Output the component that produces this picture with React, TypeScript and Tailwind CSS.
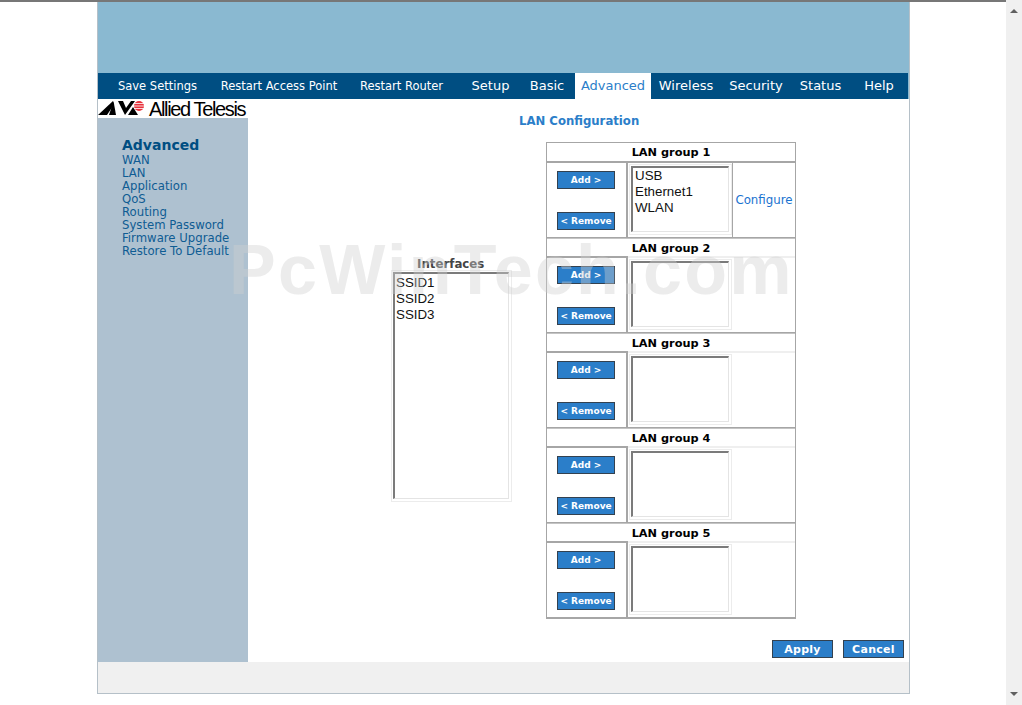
import React from 'react';

const sans = "font-['DejaVu_Sans','Verdana',sans-serif]";

const topLinks = [
    { label: 'Save Settings', w: 'w-[119px]' },
    { label: 'Restart Access Point', w: 'w-[124px]' },
    { label: 'Restart Router', w: 'w-[121px]' },
];

const tabs = [
    { label: 'Setup', w: 'w-[57px]' },
    { label: 'Basic', w: 'w-[56px]' },
    { label: 'Advanced', w: 'w-[76px]', active: true },
    { label: 'Wireless', w: 'w-[70px]' },
    { label: 'Security', w: 'w-[70px]' },
    { label: 'Status', w: 'w-[59px]' },
    { label: 'Help', w: 'w-[58px]' },
];

const sideLinks = ['WAN', 'LAN', 'Application', 'QoS', 'Routing', 'System Password', 'Firmware Upgrade', 'Restore To Default'];

const groups = [
    { name: 'LAN group 1', items: ['USB', 'Ethernet1', 'WLAN'], configure: true },
    { name: 'LAN group 2', items: [] },
    { name: 'LAN group 3', items: [] },
    { name: 'LAN group 4', items: [] },
    { name: 'LAN group 5', items: [] },
];

const SmallButton = ({ children }: { children: React.ReactNode }) => (
    <button className="h-[18px] w-[58px] whitespace-nowrap border border-[#33414f] bg-[#2b7ec9] p-0 text-[9px] font-bold leading-none text-white">
        {children}
    </button>
);

const BigButton = ({ children }: { children: React.ReactNode }) => (
    <button className="h-[18px] w-[61px] border border-[#33414f] bg-[#2b7ec9] text-[11px] font-bold leading-none tracking-[0.3px] text-white">
        {children}
    </button>
);

const ListBox = ({ items, className, inner = 'pl-[2px]' }: { items: string[]; className: string; inner?: string }) => (
    <div className={`border border-[#ececec] pb-[2px] pl-[1px] pr-[2px] pt-[1px] ${className}`}>
        <div className={`h-full border-b border-l-2 border-r border-t-2 border-b-[#e4e4e4] border-l-[#7b7b7b] border-r-[#e4e4e4] border-t-[#7b7b7b] bg-white font-['Liberation_Sans',sans-serif] text-[13.33px] leading-[16px] text-[#111] ${inner}`}>
            {items.map((item) => (
                <div key={item}>{item}</div>
            ))}
        </div>
    </div>
);

const LogoMark = () => (
    <svg width="50" height="19" viewBox="0 0 50 19" className="shrink-0">
        <polygon points="0,16 9,16 15,7 15,2" fill="#000" />
        <polygon points="11,16 18,16 15.5,2" fill="#000" />
        <polygon points="20,2 25,2 28,9 33,2 37,2 27,16" fill="#000" />
        <polygon points="30,16 40,16 35,8" fill="#000" />
        <circle cx="41" cy="7" r="5" fill="#e8323c" />
        <path d="M36 4.5h10M36 7h10M36 9.5h10" stroke="#fff" strokeWidth="0.8" />
    </svg>
);

export default function App() {
    return (
        <div className={`relative h-[705px] w-[1022px] overflow-hidden bg-white ${sans}`}>
            <div className="h-[2px] bg-[#777]" />
            <div className="flex h-[703px]">
                <div className="w-[97px]" />
                {/* 页面主框架 */}
                <div className="flex h-[692px] w-[813px] flex-col border-x border-b border-[#b5c0c8]">
                    <div className="h-[71px] bg-[#8ab9d1]" />
                    <div className="bg-[#8ab9d1]">
                        <nav className="flex h-[26px] w-[810px] items-stretch bg-[#004e82] text-white">
                            <div className="flex text-[11.5px]">
                                {topLinks.map((l) => (
                                    <div key={l.label} className={`flex items-center justify-center whitespace-nowrap pt-[2px] ${l.w}`}>
                                        {l.label}
                                    </div>
                                ))}
                            </div>
                            <div className="flex text-[13px]">
                                {tabs.map((t) => (
                                    <div
                                        key={t.label}
                                        className={`flex items-center justify-center ${t.w} ${t.active ? 'bg-white text-[#2b7ec9]' : ''}`}
                                    >
                                        {t.label}
                                    </div>
                                ))}
                            </div>
                        </nav>
                    </div>
                    <div className="flex h-[563px]">
                        {/* 左侧菜单 */}
                        <aside className="flex w-[150px] flex-col bg-[#aec1d0]">
                            <div className="flex h-[19px] items-center bg-white">
                                <LogoMark />
                                <span className="whitespace-nowrap pl-[1px] font-['Liberation_Sans',sans-serif] text-[20px] leading-none tracking-[-1.36px] text-black">
                                    Allied Telesis
                                </span>
                            </div>
                            <div className="pl-[24px] pt-[18px]">
                                <div className="text-[14px] font-bold leading-[18px] text-[#004e82]">Advanced</div>
                                {sideLinks.map((l) => (
                                    <div key={l} className="text-[11.7px] leading-[13px] text-[#0f5c93]">
                                        {l}
                                    </div>
                                ))}
                            </div>
                        </aside>

                        {/* 内容区 */}
                        <main className="relative flex w-[661px] flex-col">
                            <div className="mt-[14px] pl-[271px] text-[11.7px] font-bold leading-[16px] text-[#2b7ec9]">
                                LAN Configuration
                            </div>
                            <div className="mt-[13px] flex pl-[143px]">
                                <div className="mt-[115px] w-[121px]">
                                    <div className="pl-[26px] text-[11.8px] font-bold leading-[14px] text-[#444]">Interfaces</div>
                                    <ListBox items={['SSID1', 'SSID2', 'SSID3']} className="-mt-[1px] h-[232px] w-[121px]" inner="pl-[1px] pt-[1px]" />
                                </div>
                                <div className="ml-[34px] w-[250px] border border-[#a6a6a6]">
                                    {groups.map((g, i) => (
                                        <div key={g.name} className="h-[95px]">
                                            <div className={`h-[18px] text-center text-[11.3px] font-bold text-black ${i > 0 ? 'border-t border-[#c4c4c4] leading-[19px]' : 'leading-[20px]'}`}>
                                                {g.name}
                                            </div>
                                            <div className="flex h-[77px] border-b border-[#a6a6a6]">
                                                <div className="flex w-[81px] flex-col items-start justify-between border-r-2 border-t-2 border-[#a6a6a6] pb-[7px] pl-[10px] pt-[8px]">
                                                    <SmallButton>Add &gt;</SmallButton>
                                                    <SmallButton>&lt; Remove</SmallButton>
                                                </div>
                                                <div className={`w-[105px] border-t-2 pl-[1px] pt-[1px] ${g.configure ? 'border-r border-[#a6a6a6]' : 'border-[#efefef]'}`}>
                                                    <ListBox items={g.items} className="h-[71px] w-[103px]" />
                                                </div>
                                                <div className={`flex flex-1 items-center justify-center border-t-2 pt-[1px] text-[11.8px] text-[#1a73d0] ${g.configure ? 'border-[#a6a6a6]' : 'border-[#efefef]'}`}>
                                                    {g.configure ? 'Configure' : ''}
                                                </div>
                                            </div>
                                        </div>
                                    ))}
                                </div>
                            </div>
                            <div className="mt-[21px] flex justify-end gap-[10px] pr-[5px]">
                                <BigButton>Apply</BigButton>
                                <BigButton>Cancel</BigButton>
                            </div>
                        </main>
                    </div>
                    <div className="flex-1 bg-[#f0f0f0]" />
                </div>
                <div className="w-[96px]" />
                {/* 滚动条 */}
                <div className="relative -mt-[2px] h-[705px] w-[16px] bg-[#f0f0f0]">
                    <div className="absolute left-[4px] top-[9px] h-0 w-0 border-x-[4px] border-b-[4px] border-x-transparent border-b-[#606060]" />
                    <div className="absolute bottom-[9px] left-[4px] h-0 w-0 border-x-[4px] border-t-[4px] border-x-transparent border-t-[#606060]" />
                </div>
            </div>

            {/* 水印 */}
            <div className="pointer-events-none absolute left-[229px] top-[234px] whitespace-nowrap font-['Liberation_Sans',sans-serif] text-[70px] font-bold leading-[72px] tracking-[2.3px] text-[#d0d0d0] opacity-40">
                PcWinTech.com
            </div>
        </div>
    );
}
